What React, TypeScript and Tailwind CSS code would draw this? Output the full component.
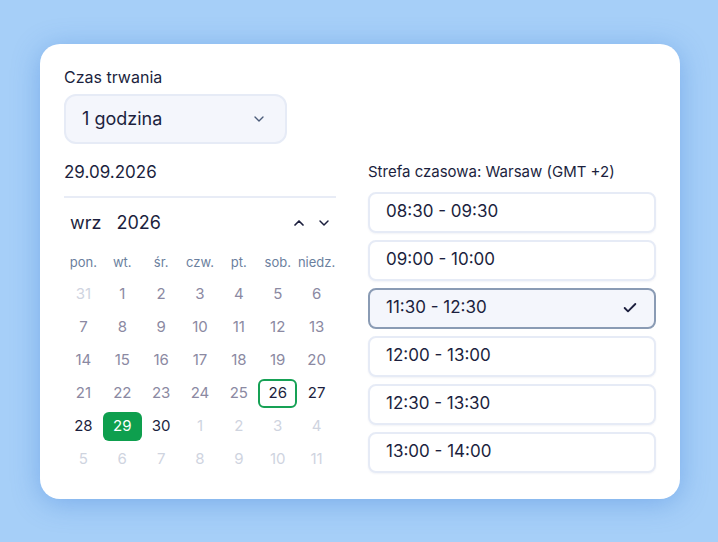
import { Check, ChevronDown, ChevronUp } from 'lucide-react';

const WEEKDAYS = ['pon.', 'wt.', 'śr.', 'czw.', 'pt.', 'sob.', 'niedz.'];

type Day = { n: number; kind: 'out' | 'past' | 'open' | 'today' | 'selected' };

const days: Day[] = [
  { n: 31, kind: 'out' },
  ...Array.from({ length: 25 }, (_, i) => ({ n: i + 1, kind: 'past' as const })),
  { n: 26, kind: 'today' },
  { n: 27, kind: 'open' },
  { n: 28, kind: 'open' },
  { n: 29, kind: 'selected' },
  { n: 30, kind: 'open' },
  ...Array.from({ length: 11 }, (_, i) => ({ n: i + 1, kind: 'out' as const })),
];

const SLOTS = ['08:30 - 09:30', '09:00 - 10:00', '11:30 - 12:30', '12:00 - 13:00', '12:30 - 13:30', '13:00 - 14:00'];

function DayCell({ day }: { day: Day }) {
  const base = 'h-[33px] flex items-center justify-center text-[15px]';
  if (day.kind === 'selected') {
    return (
      <div className={base}>
        <div className="w-[39px] h-[29px] rounded-md bg-[#0e9f4e] text-white flex items-center justify-center">{day.n}</div>
      </div>
    );
  }
  if (day.kind === 'today') {
    return (
      <div className={base}>
        <div className="w-[39px] h-[29px] rounded-md border-2 border-[#16a155] text-[#1c1f3e] flex items-center justify-center">{day.n}</div>
      </div>
    );
  }
  const color = day.kind === 'out' ? 'text-[#cfd4df]' : day.kind === 'past' ? 'text-[#8b89a2]' : 'text-[#1c1f3e]';
  return <div className={`${base} ${color}`}>{day.n}</div>;
}

export default function App() {
  return (
    <div className="min-h-[542px] h-screen w-full bg-[#a6cff8] flex items-center justify-center" style={{ fontFamily: 'Inter, "Noto Sans", sans-serif' }}>
      <div className="ml-[2px] w-[640px] bg-white rounded-[20px] shadow-[0_4px_28px_rgba(40,110,210,0.35)] px-6 pt-[21px] pb-[23px] text-[#1c1f3e]">
        <p className="text-base leading-6">Czas trwania</p>
        <button className="mt-[5px] w-[223px] h-[50px] rounded-xl bg-[#f4f6fc] border-2 border-[#e6ebf6] flex items-center justify-between pl-[16px] pr-[18px]">
          <span className="text-lg">1 godzina</span>
          <ChevronDown className="w-4 h-4 text-[#4b5b79]" strokeWidth={2} />
        </button>

        <div className="mt-[16px] grid grid-cols-[272px_288px] gap-8">
          <div>
            <p className="text-[17px] leading-6">29.09.2026</p>
            <div className="mt-[12px] h-[2px] bg-[#e8ecf6]" />
            <div className="mt-[11px] h-7 flex items-center justify-between pl-[6px]">
              <div className="flex items-center gap-[15px] text-lg">
                <span>wrz</span>
                <span>2026</span>
              </div>
              <div className="flex items-center gap-[9px] pr-[4px]">
                <ChevronUp className="w-4 h-4" strokeWidth={2.6} />
                <ChevronDown className="w-4 h-4" strokeWidth={2.2} />
              </div>
            </div>
            <div className="mt-[16px] grid grid-cols-7">
              {WEEKDAYS.map((d) => (
                <div key={d} className="h-5 flex items-center justify-center text-[13px] text-[#6b7f9e]">{d}</div>
              ))}
            </div>
            <div className="mt-[5px] grid grid-cols-7">
              {days.map((d, i) => (
                <DayCell key={i} day={d} />
              ))}
            </div>
          </div>

          <div>
            <p className="text-[15px] leading-6">Strefa czasowa: Warsaw (GMT +2)</p>
            <div className="mt-2 flex flex-col gap-[7px]">
              {SLOTS.map((s, i) => {
                const active = i === 2;
                return (
                  <div
                    key={s}
                    className={`h-[41px] rounded-lg flex items-center justify-between pl-4 pr-4 text-[17px] ${
                      active
                        ? 'bg-[#f4f6fc] border-2 border-[#8a9bb4]'
                        : 'bg-white border-2 border-[#e6ebf6] shadow-[0_1px_2px_rgba(30,50,120,0.06)]'
                    }`}
                  >
                    <span>{s}</span>
                    {active && <Check className="w-4 h-4" strokeWidth={2.8} />}
                  </div>
                );
              })}
            </div>
          </div>
        </div>
      </div>
    </div>
  );
}
